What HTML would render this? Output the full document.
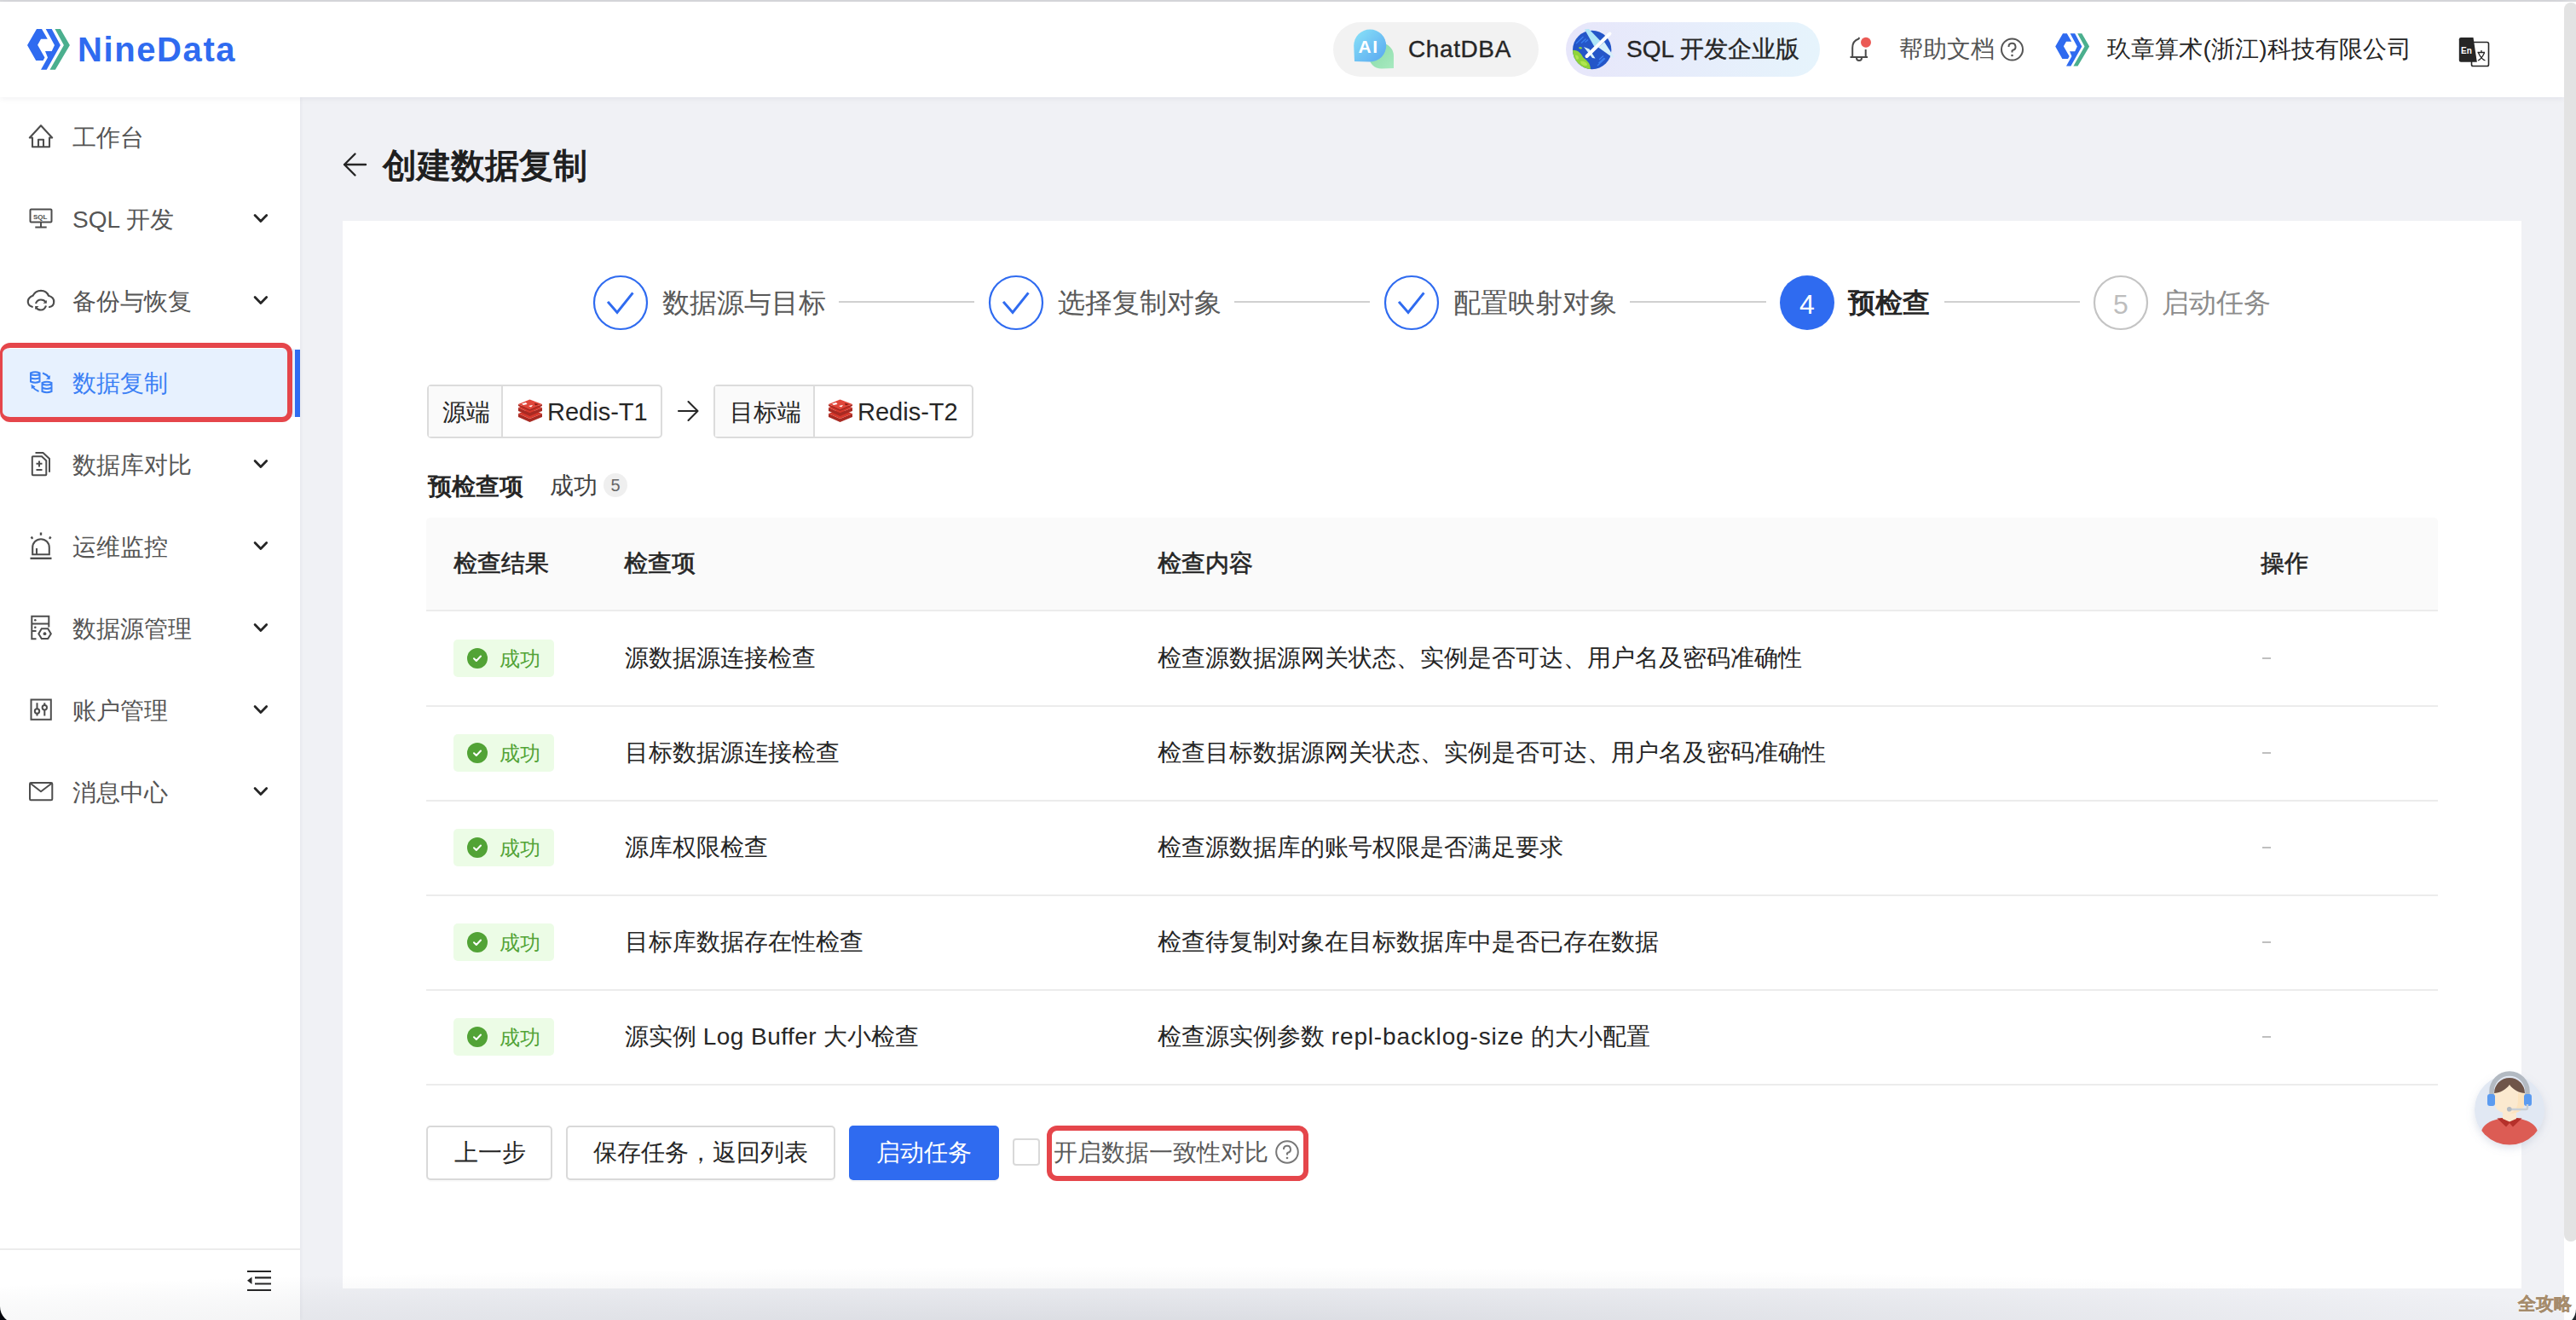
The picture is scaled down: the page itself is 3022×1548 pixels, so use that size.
<!DOCTYPE html>
<html><head><meta charset="utf-8">
<style>
*{box-sizing:border-box;margin:0;padding:0}
html,body{width:3022px;height:1548px;overflow:hidden;background:#f0f1f5;font-family:"Liberation Sans",sans-serif;color:#262626}
.a{position:absolute;white-space:nowrap}
.t28{font-size:28px;line-height:40px;height:40px}
svg{position:absolute;overflow:visible}
</style></head><body>

<!-- header -->
<div class="a" style="left:0;top:0;width:3022px;height:2px;background:#d9dadd"></div>


<!-- sidebar -->
<div class="a" style="left:0;top:114px;width:352px;height:1434px;background:#fff;box-shadow:1px 0 4px rgba(0,20,50,0.05)"></div>
<div class="a" style="left:0;top:2px;width:3008px;height:112px;background:#fff;box-shadow:0 1px 8px rgba(0,20,50,0.07)"></div>
<div class="a" style="left:0;top:1464px;width:352px;height:2px;background:#ececec"></div>

<!-- card -->
<div class="a" style="left:402px;top:259px;width:2556px;height:1252px;background:#fff"></div>

<!-- scrollbar -->
<div class="a" style="left:3008px;top:2px;width:14px;height:1546px;background:#fff"></div>
<div class="a" style="left:3008px;top:2.5px;width:16px;height:1453px;background:#e3e3e3;border-radius:8px"></div>


<!-- logo -->
<svg style="left:28px;top:30px" width="60" height="56" viewBox="0 0 60 56">
<path fill="#2f6bf0" d="M15 4 L21 4 L27.8 15.7 L20 15.7 L16.1 22.8 L24.5 37.5 L22.5 41 L14.2 41 L4 22.9 Z"/>
<path fill="#2f6bf0" d="M25.7 4 L32.7 4 L42.9 23.1 L26.7 51.8 L20 51.8 L28 37.5 L25 30.1 L32.7 30.1 L36 23.1 Z"/>
<path fill="#4baf8e" d="M36.5 4 L42.9 4 L53.9 23.1 L36.9 51.8 L30.5 51.8 L46.9 23.1 Z"/>
</svg>
<div class="a" style="left:91px;top:33px;font-size:40px;line-height:50px;font-weight:bold;color:#2f6bf0;letter-spacing:1.6px">N<span style="position:relative">i</span>neData</div>

<!-- ChatDBA pill -->
<div class="a" style="left:1564px;top:26px;width:241px;height:64px;border-radius:32px;background:#f2f2f2"></div>
<svg style="left:1580px;top:30px" width="60" height="56" viewBox="0 0 60 56">
<defs><linearGradient id="gb" x1="0" y1="0" x2="1" y2="1"><stop offset="0" stop-color="#8ae3f8"/><stop offset="1" stop-color="#58a6f0"/></linearGradient>
<linearGradient id="gg" x1="0" y1="0" x2="1" y2="1"><stop offset="0" stop-color="#86d9a6"/><stop offset="1" stop-color="#a8eac0"/></linearGradient></defs>
<path fill="url(#gg)" d="M40.7 20.6 A15 15 0 0 1 55 35.6 L55 50 L40.7 50.6 A15 15 0 0 1 25.7 35.6 A15 15 0 0 1 40.7 20.6Z"/>
<path fill="url(#gb)" d="M27.2 4.5 A19 19 0 1 1 27.2 42.5 L9 42 L8.2 23.5 A19 19 0 0 1 27.2 4.5Z"/>
<text x="13.5" y="31.8" font-family="Liberation Sans" font-weight="bold" font-size="21" letter-spacing="1.5" fill="#fff">AI</text>
</svg>
<div class="a" style="left:1652px;top:38px;font-size:28px;line-height:40px;color:#262626;-webkit-text-stroke:0.35px #262626;letter-spacing:0.6px">ChatDBA</div>

<!-- SQL pill -->
<div class="a" style="left:1837px;top:26px;width:298px;height:64px;border-radius:32px;background:linear-gradient(90deg,#e7e6fa,#e6f4fc)"></div>
<svg style="left:1840px;top:28px" width="60" height="60" viewBox="0 0 60 60">
<clipPath id="gc"><circle cx="27.7" cy="30.5" r="22.7"/></clipPath>
<circle cx="27.7" cy="30.5" r="22.7" fill="#2456c8"/>
<g clip-path="url(#gc)">
<path fill="#8fd33a" d="M4 31 C11 30 15 35 17 39 C21 43 26 45 26 54 L0 54 Z"/>
<path fill="#b0e64f" d="M8 37 C10 36 12 38 12 40 C12 42 10 42 9 41Z M14 44 C17 43 22 45 22 48 C22 50 17 49 15 47Z"/>
<path fill="#8fd33a" d="M12 28 C13 26 16 27 16 28.5 C16 30 13 30 12 28Z"/>
<path stroke="#3a7ef0" stroke-width="1.4" d="M9 23 L17.5 15 M15 22.5 L20.5 17.5 M19.5 21.5 L23 18.5 M34 49 L43 40.5 M36 42 L41 37.5 M35.5 46 L42 40"/>
</g>
<path fill="#aee6f7" d="M19 6.4 L24 6 L37.5 20 L30.5 27 Z"/>
<path fill="#d5f0fb" d="M35 27.5 L42 21 L53 38 L52.5 40 Z"/>
<path fill="#d5f0fb" d="M18 27 L24.5 29.5 L31.5 40.5 L28 40 Z"/>
<path stroke="#fff" stroke-width="4" stroke-linecap="round" d="M48.5 11.5 L21.5 38"/>
</svg>
<div class="a" style="left:1908px;top:38px;font-size:28px;line-height:40px;color:#262626;-webkit-text-stroke:0.35px #262626">SQL 开发企业版</div>

<!-- bell -->
<svg style="left:2162px;top:38px" width="40" height="40" viewBox="0 0 40 40">
<path fill="none" stroke="#4a4a4a" stroke-width="2" d="M11.2 29 L11.2 18 C11.2 12 14 9 18.5 7.5 L19.3 6 M26.7 20 L26.7 29 M8.5 29 L29 29"/>
<path fill="none" stroke="#4a4a4a" stroke-width="2" d="M16 30 A3 3 0 0 0 22 30"/>
<circle cx="27" cy="11.8" r="6" fill="#eb5a55"/>
</svg>
<div class="a t28" style="left:2228px;top:38px;color:#555">帮助文档</div>
<svg style="left:2346px;top:44px" width="30" height="30" viewBox="0 0 30 30">
<circle cx="14.5" cy="14" r="12.5" fill="none" stroke="#555" stroke-width="2"/>
<path fill="none" stroke="#555" stroke-width="2" d="M10.5 11 A4 4 0 1 1 15.5 14.7 L14.5 15.5 L14.5 17.5"/>
<circle cx="14.5" cy="21" r="1.3" fill="#555"/>
</svg>
<!-- company logo -->
<svg style="left:2408px;top:36px" width="48" height="45" viewBox="0 0 60 56">
<path fill="#2f6bf0" d="M15 4 L21 4 L27.8 15.7 L20 15.7 L16.1 22.8 L24.5 37.5 L22.5 41 L14.2 41 L4 22.9 Z"/>
<path fill="#2f6bf0" d="M25.7 4 L32.7 4 L42.9 23.1 L26.7 51.8 L20 51.8 L28 37.5 L25 30.1 L32.7 30.1 L36 23.1 Z"/>
<path fill="#4baf8e" d="M36.5 4 L42.9 4 L53.9 23.1 L36.9 51.8 L30.5 51.8 L46.9 23.1 Z"/>
</svg>
<div class="a t28" style="left:2472px;top:38px;color:#262626;letter-spacing:0.15px">玖章算术(浙江)科技有限公司</div>
<!-- language icon -->
<svg style="left:2880px;top:40px" width="44" height="42" viewBox="0 0 44 42">
<rect x="19.5" y="9.5" width="20" height="28" rx="1.8" fill="#fff" stroke="#262626" stroke-width="1.6"/>
<path fill="#262626" d="M7 4 L21.5 4 L25.8 32.8 L7 32.8 Q4.8 32.8 4.8 30.5 L4.8 6.3 Q4.8 4 7 4Z"/>
<text x="7" y="22.5" font-family="Liberation Sans" font-weight="bold" font-size="10" fill="#fff">En</text>
<path fill="none" stroke="#262626" stroke-width="1.3" d="M26.5 21.5 L35 21.5 M31 19 L31 21.5 M27.5 22 Q31 29.5 35.5 31 M34.5 22 Q31 29.5 27 31"/>
</svg>


<!-- sidebar menu -->
<div class="a" style="left:0;top:409px;width:346px;height:80px;background:#e7f1fe"></div>
<div class="a" style="left:346px;top:410px;width:6px;height:79px;background:#2f6bf0"></div>
<div class="a" style="left:0;top:402px;width:343px;height:93px;border:6px solid #e5464b;border-radius:12px;border-left-width:3.5px"></div>

<svg style="left:28px;top:136px" width="40" height="44" viewBox="0 0 40 44"><path fill="none" stroke="#4d4d4d" stroke-width="2.1" stroke-linejoin="round" d="M10 36.2 L10 25.5 L6.8 25.5 L20 11.2 L33.2 25.5 L30 25.5 L30 36.2 Z M17 36.2 L17 27.8 L23 27.8 L23 36.2"/></svg>
<div class="a t28" style="left:85px;top:142px;color:#555">工作台</div>

<svg style="left:28px;top:236px" width="40" height="40" viewBox="0 0 40 40"><rect x="7.5" y="9.6" width="25" height="15" rx="1" fill="none" stroke="#4d4d4d" stroke-width="2"/><path stroke="#4d4d4d" stroke-width="2" d="M20 24.8 L20 30.3 M13.3 30.5 L26.7 30.5"/><text x="11" y="21" font-family="Liberation Sans" font-weight="bold" font-size="8" fill="#4d4d4d">SQL</text></svg>
<div class="a t28" style="left:85px;top:238px;color:#555">SQL 开发</div>

<svg style="left:28px;top:334px" width="40" height="40" viewBox="0 0 40 40"><path fill="none" stroke="#4d4d4d" stroke-width="2.2" stroke-linecap="round" d="M9.8 25.8 C6 24.5 4.5 21.5 4.8 19 C5.2 16 7.5 14 10.5 12.8 C12.5 8.8 16 6.8 20 6.8 C24 6.8 27.5 9 29 12.8 C33 14 35.5 17 35.2 20.5 C35 23.5 33 25.5 30 26"/><path fill="none" stroke="#4d4d4d" stroke-width="2.2" d="M14 22 C15 19 17.5 17.5 20 17.5 C22.5 17.5 24.5 18.5 26 20.5 M26 24.5 C25 27.5 22.5 29.5 20 29.5 C17.5 29.5 15.5 28.5 14 26.5"/><path fill="#4d4d4d" d="M26.8 18 L26.8 21.8 L22.5 21.8Z M13.2 29 L13.2 25 L17.5 25Z"/></svg>
<div class="a t28" style="left:85px;top:334px;color:#555">备份与恢复</div>

<svg style="left:28px;top:430px" width="40" height="40" viewBox="0 0 40 40"><g fill="none" stroke="#3b80f5" stroke-width="2"><path d="M8 7.5 Q13.2 5 18.5 7.5 L18.5 17.5 Q13.2 20 8 17.5 Z M8 13.2 Q13.2 15.5 18.5 13.2 M8 9 Q13.2 11 18.5 9"/><path d="M21.5 19 Q27 16.5 32.5 19 L32.5 29 Q27 31.5 21.5 29 Z M21.5 20.5 Q27 22.5 32.5 20.5 M21.5 24.8 Q27 27 32.5 24.8"/><path d="M22 7.5 Q26.5 9 29.5 12.5 M17.5 29 Q12.5 27 9.5 23"/></g><path fill="#3b80f5" d="M26 14.5 L31 10 L30.5 15Z M8.5 20.5 L9 26 L13.5 23.5Z"/></svg>
<div class="a t28" style="left:85px;top:430px;color:#3b80f5">数据复制</div>

<svg style="left:28px;top:526px" width="40" height="40" viewBox="0 0 40 40"><g fill="none" stroke="#4d4d4d" stroke-width="2"><path d="M10.5 9.3 L21 9.3 L26.3 14.3 L26.3 30.5 Q26.3 31.3 25.5 31.3 L10.8 31.3 Q9.8 31.3 9.8 30.5 L9.8 10 Q9.8 9.3 10.5 9.3Z"/><path d="M13.5 5 L22.5 5 L30 12 L30 27.8"/><path d="M14.5 17.7 L21.5 17.7 M18 14.5 L18 21.5 M14.5 25 L21.5 25"/></g></svg>
<div class="a t28" style="left:85px;top:526px;color:#555">数据库对比</div>

<svg style="left:28px;top:622px" width="40" height="40" viewBox="0 0 40 40"><g fill="none" stroke="#4d4d4d" stroke-width="2.1"><path d="M10.2 28.2 L10.2 20 A9.8 9.8 0 0 1 29.8 20 L29.8 28.2 Z M15 21 L15 28"/><path d="M20 2.5 L20 5.8 M8.7 7.5 L10.2 9.8 M31.5 7.5 L30 9.8" stroke-width="2.4"/><path d="M7.5 32.8 L32.5 32.8" stroke-width="2.4"/></g></svg>
<div class="a t28" style="left:85px;top:622px;color:#555">运维监控</div>

<svg style="left:28px;top:718px" width="40" height="40" viewBox="0 0 40 40"><g fill="none" stroke="#4d4d4d" stroke-width="2"><path d="M14.5 31.3 L9.3 31.3 L9.3 4.8 L29.3 4.8 L29.3 17.5 M9.3 13.5 L29.3 13.5 M9.3 22 L14.5 22"/><path d="M20.8 19.3 L28.2 19.3 L31.8 25.2 L28.2 31.1 L20.8 31.1 L17.3 25.2 Z"/></g><circle cx="13.3" cy="9.3" r="1.3" fill="#4d4d4d"/><circle cx="13.3" cy="17.8" r="1.3" fill="#4d4d4d"/><circle cx="24.5" cy="25.2" r="1.9" fill="#4d4d4d"/></svg>
<div class="a t28" style="left:85px;top:718px;color:#555">数据源管理</div>

<svg style="left:28px;top:814px" width="40" height="40" viewBox="0 0 40 40"><g fill="none" stroke="#4d4d4d" stroke-width="2"><rect x="8.5" y="6.5" width="23.3" height="23.3"/><path d="M15.5 10.3 L15.5 17.3 M15.5 22.8 L15.5 25.5 M24.3 10.3 L24.3 13 M24.3 18.5 L24.3 25.5"/><circle cx="15.5" cy="20" r="2.7"/><circle cx="24.3" cy="15.7" r="2.7"/></g></svg>
<div class="a t28" style="left:85px;top:814px;color:#555">账户管理</div>

<svg style="left:28px;top:910px" width="40" height="40" viewBox="0 0 40 40"><g fill="none" stroke="#4d4d4d" stroke-width="2"><rect x="7" y="8" width="26.3" height="20.3" rx="1.3"/><path d="M7.8 8.8 L20 18.3 L32.5 8.8" stroke-linejoin="round"/></g></svg>
<div class="a t28" style="left:85px;top:910px;color:#555">消息中心</div>

<!-- chevrons -->
<svg style="left:290px;top:240px" width="32" height="740" viewBox="0 0 32 740">
<g fill="none" stroke="#262626" stroke-width="2.8" stroke-linecap="round" stroke-linejoin="round">
<path d="M9.1 12.4 L15.9 19.4 L22.7 12.4"/>
<path d="M9.1 108.4 L15.9 115.4 L22.7 108.4"/>
<path d="M9.1 300.4 L15.9 307.4 L22.7 300.4"/>
<path d="M9.1 396.4 L15.9 403.4 L22.7 396.4"/>
<path d="M9.1 492.4 L15.9 499.4 L22.7 492.4"/>
<path d="M9.1 588.4 L15.9 595.4 L22.7 588.4"/>
<path d="M9.1 684.4 L15.9 691.4 L22.7 684.4"/>
</g></svg>

<!-- collapse icon -->
<svg style="left:288px;top:1486px" width="34" height="34" viewBox="0 0 34 34">
<path stroke="#262626" stroke-width="2.2" d="M2 5 L30 5 M11 12.3 L30 12.3 M11 19.5 L30 19.5 M2 27 L30 27"/>
<path fill="#262626" d="M2 15.8 L7.5 11.5 L7.5 20Z"/>
</svg>


<!-- title -->
<svg style="left:400px;top:176px" width="34" height="34" viewBox="0 0 34 34">
<path fill="none" stroke="#262626" stroke-width="2.4" stroke-linecap="round" stroke-linejoin="round" d="M4 17 L29 17 M16.5 4.5 L4 17 L16.5 29.5"/>
</svg>
<div class="a" style="left:449px;top:174px;font-size:40px;line-height:40px;font-weight:bold;color:#1f1f1f">创建数据复制</div>

<!-- steps -->
<svg style="left:690px;top:317px" width="2000" height="80" viewBox="0 0 2000 80">
<g fill="none" stroke="#2f6bf0" stroke-width="2.2">
<circle cx="38" cy="38" r="31"/><circle cx="502" cy="38" r="31"/><circle cx="966" cy="38" r="31"/>
</g>
<g fill="none" stroke="#2f6bf0" stroke-width="3" stroke-linecap="square">
<path d="M24 38 L34 49.5 L51.5 27.5"/><path d="M488 38 L498 49.5 L515.5 27.5"/><path d="M952 38 L962 49.5 L979.5 27.5"/>
</g>
<circle cx="1430" cy="38" r="32" fill="#2f6bf0"/>
<circle cx="1798" cy="38" r="31" fill="none" stroke="#c4c4c4" stroke-width="2.2"/>
<g stroke="#d0d0d0" stroke-width="2">
<path d="M294 37 L453 37"/><path d="M758 37 L917 37"/><path d="M1222 37 L1382 37"/><path d="M1591 37 L1750 37"/>
</g>
</svg>
<div class="a" style="left:2088px;top:337px;width:64px;text-align:center;font-size:32px;line-height:40px;color:#fff">4</div>
<div class="a" style="left:2456px;top:337px;width:64px;text-align:center;font-size:32px;line-height:40px;color:#bdbdbd">5</div>
<div class="a" style="left:777px;top:335px;font-size:32px;line-height:40px;color:#595959">数据源与目标</div>
<div class="a" style="left:1241px;top:335px;font-size:32px;line-height:40px;color:#595959">选择复制对象</div>
<div class="a" style="left:1705px;top:335px;font-size:32px;line-height:40px;color:#595959">配置映射对象</div>
<div class="a" style="left:2168px;top:335px;font-size:32px;line-height:40px;color:#262626;font-weight:bold">预检查</div>
<div class="a" style="left:2536px;top:335px;font-size:32px;line-height:40px;color:#8c8c8c">启动任务</div>


<!-- tags -->
<div class="a" style="left:501px;top:451px;width:276px;height:63px;border:2px solid #dcdcdc;border-radius:5px;background:#fff"></div>
<div class="a" style="left:503px;top:453px;width:87px;height:59px;background:#fafafa;border-right:2px solid #dcdcdc"></div>
<div class="a t28" style="left:519px;top:464px;color:#262626">源端</div>
<svg style="left:607px;top:468px" width="30" height="28" viewBox="0 0 30 28">
<path fill="#a82a22" d="M1 17 L1 21 L14.5 27 L29 21 L29 17 L14.5 23Z"/>
<path fill="#d8382c" d="M1 17 L14.5 11.5 L29 17 L14.5 23Z"/>
<path fill="#a82a22" d="M1 10 L1 14 L14.5 20 L29 14 L29 10 L14.5 16Z"/>
<path fill="#d8382c" d="M1 10 L14.5 4.5 L29 10 L14.5 16Z"/>
<path fill="#a82a22" d="M1 6 L1 8 L14.5 14 L29 8 L29 6 L14.5 12Z"/>
<path fill="#e0463a" d="M1 6 L14.5 0.5 L29 6 L14.5 12Z"/>
<path fill="#fff" d="M5 5.5 L10 4 L11.5 6 L7 7Z M13 8 L18 7 L16 9.5Z"/>
<path fill="#7a1a14" d="M20 5 L25 6 L21 7.5Z"/>
</svg>
<div class="a" style="left:642px;top:463px;font-size:29px;line-height:40px;color:#262626">Redis-T1</div>
<svg style="left:792px;top:466px" width="30" height="30" viewBox="0 0 30 30">
<path fill="none" stroke="#262626" stroke-width="2.1" stroke-linecap="round" stroke-linejoin="round" d="M4 16 L26 16 M15.5 5 L26.5 16 L15.5 27"/>
</svg>
<div class="a" style="left:837px;top:451px;width:305px;height:63px;border:2px solid #dcdcdc;border-radius:5px;background:#fff"></div>
<div class="a" style="left:839px;top:453px;width:117px;height:59px;background:#fafafa;border-right:2px solid #dcdcdc"></div>
<div class="a t28" style="left:856px;top:464px;color:#262626">目标端</div>
<svg style="left:971px;top:468px" width="30" height="28" viewBox="0 0 30 28">
<path fill="#a82a22" d="M1 17 L1 21 L14.5 27 L29 21 L29 17 L14.5 23Z"/>
<path fill="#d8382c" d="M1 17 L14.5 11.5 L29 17 L14.5 23Z"/>
<path fill="#a82a22" d="M1 10 L1 14 L14.5 20 L29 14 L29 10 L14.5 16Z"/>
<path fill="#d8382c" d="M1 10 L14.5 4.5 L29 10 L14.5 16Z"/>
<path fill="#a82a22" d="M1 6 L1 8 L14.5 14 L29 8 L29 6 L14.5 12Z"/>
<path fill="#e0463a" d="M1 6 L14.5 0.5 L29 6 L14.5 12Z"/>
<path fill="#fff" d="M5 5.5 L10 4 L11.5 6 L7 7Z M13 8 L18 7 L16 9.5Z"/>
<path fill="#7a1a14" d="M20 5 L25 6 L21 7.5Z"/>
</svg>
<div class="a" style="left:1006px;top:463px;font-size:29px;line-height:40px;color:#262626">Redis-T2</div>

<div class="a" style="left:502px;top:551px;font-size:28px;line-height:40px;font-weight:bold;color:#262626">预检查项</div>
<div class="a t28" style="left:645px;top:550px;color:#404040">成功</div>
<div class="a" style="left:708px;top:555px;width:28px;height:28px;border-radius:14px;background:#efefef;font-size:20px;line-height:28px;text-align:center;color:#666">5</div>

<!-- table -->
<div class="a" style="left:500px;top:607px;width:2360px;height:109px;background:#fafafa;border-radius:5px 5px 0 0"></div>
<div class="a" style="left:500px;top:715px;width:2360px;height:2px;background:#ececec"></div>
<div class="a" style="left:532px;top:641px;font-size:28px;line-height:40px;color:#262626;-webkit-text-stroke:0.6px #262626">检查结果</div>
<div class="a" style="left:732px;top:641px;font-size:28px;line-height:40px;color:#262626;-webkit-text-stroke:0.6px #262626">检查项</div>
<div class="a" style="left:1358px;top:641px;font-size:28px;line-height:40px;color:#262626;-webkit-text-stroke:0.6px #262626">检查内容</div>
<div class="a" style="left:2652px;top:641px;font-size:28px;line-height:40px;color:#262626;-webkit-text-stroke:0.6px #262626">操作</div>

<div class="a" style="left:532px;top:750px;width:118px;height:44px;border-radius:5px;background:#ecfce6"></div>
<svg style="left:548px;top:760px" width="24" height="24" viewBox="0 0 24 24"><circle cx="12" cy="12" r="12" fill="#52a336"/><path fill="none" stroke="#fff" stroke-width="2" stroke-linecap="round" stroke-linejoin="round" d="M8 12.3 L10.8 15 L16 9.5"/></svg>
<div class="a" style="left:586px;top:753px;font-size:24px;line-height:40px;color:#52a336">成功</div>
<div class="a t28" style="left:733px;top:752px;color:#262626">源数据源连接检查</div>
<div class="a t28" style="left:1358px;top:752px;color:#262626">检查源数据源网关状态、实例是否可达、用户名及密码准确性</div>
<div class="a" style="left:2654px;top:771px;width:10px;height:2px;background:#bfbfbf"></div>
<div class="a" style="left:500px;top:827px;width:2360px;height:2px;background:#ececec"></div>
<div class="a" style="left:532px;top:861px;width:118px;height:44px;border-radius:5px;background:#ecfce6"></div>
<svg style="left:548px;top:871px" width="24" height="24" viewBox="0 0 24 24"><circle cx="12" cy="12" r="12" fill="#52a336"/><path fill="none" stroke="#fff" stroke-width="2" stroke-linecap="round" stroke-linejoin="round" d="M8 12.3 L10.8 15 L16 9.5"/></svg>
<div class="a" style="left:586px;top:864px;font-size:24px;line-height:40px;color:#52a336">成功</div>
<div class="a t28" style="left:733px;top:863px;color:#262626">目标数据源连接检查</div>
<div class="a t28" style="left:1358px;top:863px;color:#262626">检查目标数据源网关状态、实例是否可达、用户名及密码准确性</div>
<div class="a" style="left:2654px;top:882px;width:10px;height:2px;background:#bfbfbf"></div>
<div class="a" style="left:500px;top:938px;width:2360px;height:2px;background:#ececec"></div>
<div class="a" style="left:532px;top:972px;width:118px;height:44px;border-radius:5px;background:#ecfce6"></div>
<svg style="left:548px;top:982px" width="24" height="24" viewBox="0 0 24 24"><circle cx="12" cy="12" r="12" fill="#52a336"/><path fill="none" stroke="#fff" stroke-width="2" stroke-linecap="round" stroke-linejoin="round" d="M8 12.3 L10.8 15 L16 9.5"/></svg>
<div class="a" style="left:586px;top:975px;font-size:24px;line-height:40px;color:#52a336">成功</div>
<div class="a t28" style="left:733px;top:974px;color:#262626">源库权限检查</div>
<div class="a t28" style="left:1358px;top:974px;color:#262626">检查源数据库的账号权限是否满足要求</div>
<div class="a" style="left:2654px;top:993px;width:10px;height:2px;background:#bfbfbf"></div>
<div class="a" style="left:500px;top:1049px;width:2360px;height:2px;background:#ececec"></div>
<div class="a" style="left:532px;top:1083px;width:118px;height:44px;border-radius:5px;background:#ecfce6"></div>
<svg style="left:548px;top:1093px" width="24" height="24" viewBox="0 0 24 24"><circle cx="12" cy="12" r="12" fill="#52a336"/><path fill="none" stroke="#fff" stroke-width="2" stroke-linecap="round" stroke-linejoin="round" d="M8 12.3 L10.8 15 L16 9.5"/></svg>
<div class="a" style="left:586px;top:1086px;font-size:24px;line-height:40px;color:#52a336">成功</div>
<div class="a t28" style="left:733px;top:1085px;color:#262626">目标库数据存在性检查</div>
<div class="a t28" style="left:1358px;top:1085px;color:#262626">检查待复制对象在目标数据库中是否已存在数据</div>
<div class="a" style="left:2654px;top:1104px;width:10px;height:2px;background:#bfbfbf"></div>
<div class="a" style="left:500px;top:1160px;width:2360px;height:2px;background:#ececec"></div>
<div class="a" style="left:532px;top:1194px;width:118px;height:44px;border-radius:5px;background:#ecfce6"></div>
<svg style="left:548px;top:1204px" width="24" height="24" viewBox="0 0 24 24"><circle cx="12" cy="12" r="12" fill="#52a336"/><path fill="none" stroke="#fff" stroke-width="2" stroke-linecap="round" stroke-linejoin="round" d="M8 12.3 L10.8 15 L16 9.5"/></svg>
<div class="a" style="left:586px;top:1197px;font-size:24px;line-height:40px;color:#52a336">成功</div>
<div class="a t28" style="left:733px;top:1196px;color:#262626">源实例 <span style="letter-spacing:0.45px">Log Buffer</span> 大小检查</div>
<div class="a t28" style="left:1358px;top:1196px;color:#262626">检查源实例参数 <span style="letter-spacing:0.85px">repl-backlog-size</span> 的大小配置</div>
<div class="a" style="left:2654px;top:1215px;width:10px;height:2px;background:#bfbfbf"></div>
<div class="a" style="left:500px;top:1271px;width:2360px;height:2px;background:#ececec"></div>
<!-- buttons -->
<div class="a" style="left:500px;top:1320px;width:148px;height:64px;border:2px solid #d9d9d9;border-radius:5px;background:#fff;box-shadow:0 2px 0 rgba(0,0,0,0.02)"></div>
<div class="a t28" style="left:533px;top:1332px;color:#262626">上一步</div>
<div class="a" style="left:664px;top:1320px;width:316px;height:64px;border:2px solid #d9d9d9;border-radius:5px;background:#fff;box-shadow:0 2px 0 rgba(0,0,0,0.02)"></div>
<div class="a t28" style="left:696px;top:1332px;color:#262626">保存任务，返回列表</div>
<div class="a" style="left:996px;top:1320px;width:176px;height:64px;border-radius:5px;background:#2f6bf0;box-shadow:0 2px 0 rgba(0,0,0,0.04)"></div>
<div class="a t28" style="left:1028px;top:1332px;color:#fff">启动任务</div>
<div class="a" style="left:1188px;top:1335px;width:32px;height:32px;border:2px solid #d9d9d9;border-radius:4px;background:#fff"></div>
<div class="a t28" style="left:1236px;top:1332px;color:#595959">开启数据一致性对比</div>
<svg style="left:1494px;top:1336px" width="32" height="32" viewBox="0 0 32 32">
<circle cx="16" cy="15" r="12.8" fill="none" stroke="#777" stroke-width="2"/>
<path fill="none" stroke="#777" stroke-width="2" d="M12 12 A4 4 0 1 1 17 15.7 L16 16.5 L16 18.5"/>
<circle cx="16" cy="22" r="1.3" fill="#777"/>
</svg>
<div class="a" style="left:1228px;top:1320px;width:307px;height:65px;border:6px solid #e5464b;border-radius:12px"></div>


<!-- avatar -->
<svg style="left:2890px;top:1245px" width="110" height="120" viewBox="0 0 110 120">
<defs><clipPath id="ac"><circle cx="54" cy="56.5" r="41"/></clipPath>
<filter id="sh" x="-50%" y="-50%" width="200%" height="200%"><feDropShadow dx="0" dy="4" stdDeviation="5" flood-color="#8090b0" flood-opacity="0.25"/></filter></defs>
<circle cx="54" cy="56.5" r="41" fill="#e1e8f3" filter="url(#sh)"/>
<g clip-path="url(#ac)">
<path fill="#dc5c54" d="M21 82 C24 70 40 66 54 66 C68 66 84 70 87 82 L87 110 L21 110Z"/>
<path fill="#b5302a" d="M39.5 66.5 L54 65.5 L68.5 66.5 L58 76.5 L54 72 L50 76.5Z"/>
</g>
<path fill="#fbe9cf" d="M46 59 L62 59 L62 67 L54 70.5 L46 67Z"/>
<path fill="#6f5549" d="M36 37 A18 18 0 0 1 72 37 L72 40 L36 40Z"/>
<path fill="#fbe9cf" d="M36 37 C42 37 50 33 54 27 C58 33 66 37 72 37 L72 47 C72 56 64 61 54 61 C44 61 36 56 36 47Z"/>
<path fill="#fce0b5" d="M64 37 C68 38 72 37 72 37 L72 47 C72 56 64 61 54 61 C62 58 64 52 64 45Z" opacity="0.7"/>
<path fill="none" stroke="#b3bac2" stroke-width="5.5" d="M33 42 L33 35 A21 21 0 0 1 75 35 L75 42"/>
<rect x="28" y="38" width="9" height="14" rx="3" fill="#5b9bf0"/>
<rect x="71" y="38" width="9" height="14" rx="3" fill="#5b9bf0"/>
<path fill="none" stroke="#c9cfd5" stroke-width="2.5" d="M75 50 L75 54 Q75 56 73 56 L55 56"/>
<circle cx="53.75" cy="55.8" r="2.8" fill="#b3bac2"/>
</svg>

<!-- watermark -->
<div class="a" style="left:2954px;top:1516px;font-size:21px;line-height:26px;font-weight:bold;color:#a68c6c;-webkit-text-stroke:0.4px #a68c6c;text-shadow:0 0 2px #fff,0 0 2px #fff">全攻略</div>

<!-- bottom shadow -->
<div class="a" style="left:0;top:1460px;width:3022px;height:88px;background:radial-gradient(ellipse 1900px 75px at 1350px 100px, rgba(40,50,70,0.12), rgba(40,50,70,0) 100%)"></div>

<!-- window corners -->
<svg style="left:0;top:1500px" width="3022" height="48" viewBox="0 1500 3022 48">
<path fill="#05070d" d="M0 1532 A20 20 0 0 0 20 1552 L0 1552Z"/>
<path fill="#22292f" d="M3022 1535 A20 20 0 0 1 3002 1555 L3022 1555Z"/>
</svg>

</body></html>
